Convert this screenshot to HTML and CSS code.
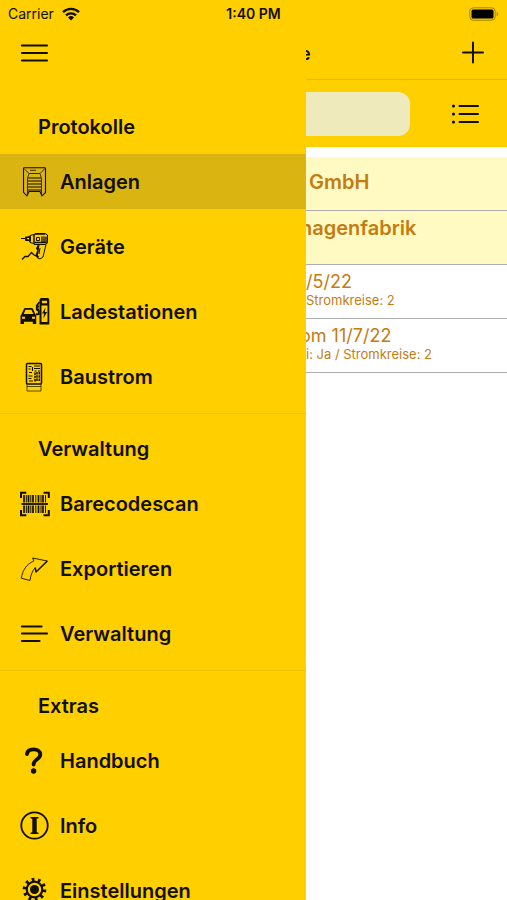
FILE: index.html
```html
<!DOCTYPE html>
<html lang="de">
<head>
<meta charset="utf-8">
<meta name="viewport" content="width=device-width, initial-scale=1">
<title>Anlagen</title>
<link rel="stylesheet" href="styles.css">
</head>
<body>
<div class="app">
  <header class="status">
    <div class="carrier">
      <span>Carrier</span>
      <svg class="wifi" viewBox="0 0 18 14" aria-hidden="true">
        <path d="M1 5.2A11.5 11.5 0 0 1 17 5.2M4 8.4a7.2 7.2 0 0 1 10 0" fill="none" stroke="currentColor" stroke-width="2.3"/>
        <path d="M9 13.4 6 10.5a4.3 4.3 0 0 1 6 0z" fill="currentColor"/>
      </svg>
    </div>
    <div class="time">1:40 PM</div>
    <svg class="battery" viewBox="0 0 30 14" aria-hidden="true">
      <rect x="0.8" y="0.8" width="25.4" height="12.4" rx="3.6" fill="none" stroke="#a38600" stroke-width="1"/>
      <rect x="2.5" y="2.5" width="22" height="9" rx="1.5" fill="#000"/>
      <path d="M27.7 4.8v4.4c2-.8 2-3.6 0-4.4z" fill="#a38600"/>
    </svg>
  </header>

  <div class="columns">
    <nav class="drawer" aria-label="Menü">
      <div class="drawer-bar">
        <button class="icon-button" type="button" aria-label="Menü">
          <svg class="icon" viewBox="0 0 30 30"><path d="M2 7.5h25M2 15h25M2 22.5h25" fill="none" stroke="currentColor" stroke-width="2.2" stroke-linecap="round"/></svg>
        </button>
      </div>

      <section class="group">
        <h2>Protokolle</h2>
        <ul>
          <li><a class="item selected" href="#anlagen" aria-current="page">
            <svg class="icon" viewBox="0 0 30 30" fill="none" stroke="currentColor" stroke-width="1">
              <path d="M3.500 1.200Q3.500.7 4.500.7h20q1 0 1 .8v24l-3.500 3.300-2-4.300H9L7 28.800l-3.500-3.500z" stroke-width="1.100"/>
              <path d="M4 1.500l5 5-1.500 5V28M25 1.500l-5 5 1.500 5V28M9 6.500h11" stroke-width=".8"/>
              <path d="M10 3.300h6" stroke-width=".8"/>
              <path d="M8 11h13M8 14h13M8 17h13M8 20h13M8 23h13" stroke-width="1.200"/>
            </svg>
            <span>Anlagen</span></a></li>
          <li><a class="item" href="#geraete">
            <svg class="icon" viewBox="0 0 30 30" fill="none" stroke="currentColor" stroke-width="1">
              <path d="M1 6.500h5l4-2.500v5.500l-4-2.500M10 3.500l4-1v9l-4-1zM14 2.500l2-1h9l2.500 1.500v8l-2.500 1.500H14z"/>
              <path d="M6 5.200h4v3H6zM15 2h10M14.500 10.500h12" stroke-width="1.600"/>
              <path d="M22 4.500v6M24 4.500v6M26 4.500v6" stroke-width="1.300"/>
              <path d="M16.500 5.500h3v3h-3zM19 13l-1.500 8-.5 4.500 3 1.500 3-2 3-12.500M20 16l-1 6"/>
              <path d="M18.500 13.500l-1.500 3 1.300 2M18 19l-1.500 4 2 2.500" stroke-width="1.800"/>
              <path d="M2 27.500l3-3h3l3.500-4 2.500 2.500 3.500 1.500" stroke-width="1.300"/>
            </svg>
            <span>Geräte</span></a></li>
          <li><a class="item" href="#ladestationen">
            <svg class="icon" viewBox="0 0 30 30">
              <path fill="currentColor" fill-rule="evenodd" d="M1.600 17 4 11.800Q4.400 11 5.500 11h6q1 0 1.500.8L15.200 17l1 1.800V27h-3.400v-2.300H4V27H.5v-8.200zM3.700 17h9.700l-2-4.300H5.500zM2 19.700v2h3v-2zM12 19.700v2h3v-2z"/>
              <path fill="currentColor" fill-rule="evenodd" d="M21.500 1h6Q29.300 1 29.300 3v24.500h-9.800V3q0-2 2-2zM22 3.700v2.500h5V3.700zM21.500 8.500v16.500h6V8.500z"/>
              <path d="M25.500 10.500l-3.500 6h2.200l-1 5 4-6.500h-2.400z" fill="currentColor"/>
              <path d="M19.500 5l-2.700 3.500v4l2 1.500v3l-3 .5M16 9.500h3M16 12.500h3" fill="none" stroke="currentColor" stroke-width="1.800"/>
            </svg>
            <span>Ladestationen</span></a></li>
          <li><a class="item" href="#baustrom">
            <svg class="icon" viewBox="0 0 30 30" fill="none" stroke="currentColor">
              <rect x="6.500" y="1.500" width="15" height="20.500" rx="1" stroke-width="1.500"/>
              <path d="M7 22v7h14v-7M7 24.500h14" stroke-width=".7"/>
              <path d="M8.500 4.500h3M8.500 7h2M14 4h6M14 6.500h6M14.500 9h2M18 9h2M9 10.500h3" stroke-width="1"/>
              <path d="M15 10.500v9M17 10v10M19.300 10v10" stroke-width="1.500" stroke-dasharray="2.500 .8"/>
              <path d="M8.500 14h4M8.500 16.500h3M9 19h4M12.500 5v4" stroke-width="1.100"/>
            </svg>
            <span>Baustrom</span></a></li>
        </ul>
      </section>

      <section class="group">
        <h2>Verwaltung</h2>
        <ul>
          <li><a class="item" href="#scan">
            <svg class="icon" viewBox="0 0 30 30" fill="none" stroke="currentColor">
              <path d="M1 9V3.700h5.300M23.500 3.700h5.300V9M28.800 21v5.300h-5.300M6.300 26.300H1V21" stroke-width="2"/>
              <path d="M1.500 15h26.500" stroke-width="1.800"/>
              <path d="M4 6v7.500M8.500 6v7.500M13 6v7.500M18.500 6v7.500M23 6v7.500M4 16.500V24M8.500 16.500V24M13 16.500V24M18.500 16.500V24M23 16.500V24" stroke-width="1.700"/>
              <path d="M6.300 6v7.500M10.800 6v7.500M15.800 6v7.500M21 6v7.500M25.500 6v7.500M6.300 16.500V24M10.800 16.500V24M15.800 16.500V24M21 16.500V24M25.500 16.500V24" stroke-width="1"/>
            </svg>
            <span>Barecodescan</span></a></li>
          <li><a class="item" href="#export">
            <svg class="icon" viewBox="0 0 30 30" fill="none" stroke="currentColor" stroke-linejoin="round">
              <path d="M12.700 4l14.600 3L16 18l-.7-4.300C12.500 16.500 10.700 21 10 26.500l-8.700-2.300C2.500 16.500 6.500 10 13.800 7z" stroke-width=".9"/>
              <path d="M27.300 7 16 18l-.7-4.300" stroke-width="1.400"/>
            </svg>
            <span>Exportieren</span></a></li>
          <li><a class="item" href="#verwaltung">
            <svg class="icon" viewBox="0 0 30 30"><path d="M2 7.500h19.500M2 14.500h25M2 22h17.500" fill="none" stroke="currentColor" stroke-width="2.200" stroke-linecap="round"/></svg>
            <span>Verwaltung</span></a></li>
        </ul>
      </section>

      <section class="group">
        <h2>Extras</h2>
        <ul>
          <li><a class="item" href="#handbuch">
            <svg class="icon" viewBox="0 0 30 30">
              <path d="M7 8c.4-3.200 3-4.700 6.500-4.700 4 0 6.800 2 6.800 5.300 0 4.900-6.700 4.400-6.700 10" fill="none" stroke="currentColor" stroke-width="3.800" stroke-linecap="round"/>
              <circle cx="13.600" cy="25" r="2.700" fill="currentColor"/>
            </svg>
            <span>Handbuch</span></a></li>
          <li><a class="item" href="#info">
            <svg class="icon" viewBox="0 0 30 30">
              <circle cx="14.500" cy="14.500" r="13.200" fill="none" stroke="currentColor" stroke-width="1.800"/>
              <path d="M10.500 6h8v1.300l-1.800.5v13.400l1.800.5V23h-8v-1.300l1.800-.5V7.800l-1.800-.5z" fill="currentColor"/>
            </svg>
            <span>Info</span></a></li>
          <li><a class="item" href="#einstellungen">
            <svg class="icon" viewBox="0 0 30 30" fill="none" stroke="currentColor">
              <circle cx="14.500" cy="13.500" r="7.800" stroke-width="2.200"/>
              <circle cx="14.500" cy="13.500" r="10" stroke-width="3.600" stroke-dasharray="2.700 3.583"/>
              <circle cx="14.500" cy="13.500" r="4.500" fill="currentColor" stroke="none"/>
            </svg>
            <span>Einstellungen</span></a></li>
        </ul>
      </section>
    </nav>

    <main class="content">
      <div class="title-bar">
        <h1 class="clipped">e</h1>
        <button class="icon-button" type="button" aria-label="Hinzufügen">
          <svg class="icon" viewBox="0 0 30 30"><path d="M15 4.500v20M5 14.500h20" fill="none" stroke="currentColor" stroke-width="2" stroke-linecap="round"/></svg>
        </button>
      </div>
      <div class="search-bar">
        <input class="search" type="search" aria-label="Suche">
        <button class="icon-button" type="button" aria-label="Liste">
          <svg class="icon" viewBox="0 0 30 30"><path d="M9.500 7h18.500M9.500 15h18.500M9.500 23h18.500" fill="none" stroke="currentColor" stroke-width="2" stroke-linecap="round"/><g fill="currentColor"><circle cx="3.500" cy="7" r="1.600"/><circle cx="3.500" cy="15" r="1.600"/><circle cx="3.500" cy="23" r="1.600"/></g></svg>
        </button>
      </div>
      <ul class="records">
        <li class="customer centered"><strong>GmbH</strong></li>
        <li class="customer"><strong class="clipped">hagenfabrik</strong></li>
        <li class="record"><span class="name">/5/22</span><small>Stromkreise: 2</small></li>
        <li class="record"><span class="name clipped">om 11/7/22</span><small>i: Ja / Stromkreise: 2</small></li>
      </ul>
    </main>
  </div>
</div>
</body>
</html>
```
FILE: styles.css
```css
* {
  box-sizing: border-box;
}

body {
  margin: 0;
  background: #fff;
  color: #120e00;
  font-family: Inter, "Liberation Sans", sans-serif;
}

h1, h2, ul {
  margin: 0;
  padding: 0;
}

ul {
  list-style: none;
}

.app {
  display: flex;
  flex-direction: column;
  height: 100vh;
  overflow: hidden;
}

.status {
  display: grid;
  grid-template-columns: 1fr auto 1fr;
  align-items: center;
  flex: none;
  height: 27px;
  padding: 0 8px;
  background: #ffcf00;
  font-size: 14px;
}

.carrier {
  display: flex;
  align-items: center;
  gap: 8px;
}

.wifi {
  width: 18px;
  height: 14px;
}

.time {
  font-weight: 600;
}

.battery {
  justify-self: end;
  width: 30px;
  height: 14px;
}

.columns {
  display: flex;
  flex: 1;
  min-height: 0;
}

.drawer {
  flex: none;
  width: 306px;
  overflow: hidden;
  background: #ffcf00;
}

.drawer-bar {
  display: flex;
  align-items: center;
  height: 65px;
  padding: 0 20px 13px;
}

.icon-button {
  display: flex;
  padding: 0;
  border: 0;
  background: none;
  color: inherit;
}

.icon {
  flex: none;
  display: block;
  width: 30px;
  height: 30px;
}

.group {
  padding: 8px 0 9px;
  border-bottom: 1px solid #eec205;
}

.group h2 {
  padding-left: 38px;
  font-size: 20px;
  font-weight: 600;
  line-height: 54px;
}

.group ul {
  display: grid;
  gap: 10px;
}

.item {
  display: flex;
  align-items: center;
  gap: 10px;
  height: 55px;
  padding: 0 20px;
  color: inherit;
  font-size: 20px;
  font-weight: 600;
  text-decoration: none;
}

.selected {
  background: #dab410;
}

.content {
  flex: 1;
  min-width: 0;
  overflow: hidden;
}

.title-bar,
.search-bar {
  display: flex;
  align-items: center;
  justify-content: space-between;
  background: #ffcf00;
}

.title-bar {
  height: 53px;
  padding-right: 19px;
  border-bottom: 1px solid #e6bb08;
}

.title-bar h1 {
  font-size: 18px;
  font-weight: 600;
}

.search-bar {
  gap: 40px;
  height: 67px;
  padding-right: 27px;
}

.search {
  flex: 1;
  min-width: 0;
  height: 44px;
  padding: 0 12px;
  border: 0;
  border-radius: 0 12px 12px 0;
  background: #efeabc;
  font: inherit;
  appearance: none;
}

.records {
  padding-top: 10px;
  color: #c47c10;
}

.records li {
  display: flex;
  flex-direction: column;
  height: 54px;
  padding-top: 5px;
  border-bottom: 1px solid #adadad;
  white-space: nowrap;
}

.records .customer {
  background: #fff9c2;
}

.records .centered {
  justify-content: center;
  padding: 0 3px 3px;
}

.records strong {
  font-size: 20px;
  font-weight: 600;
  line-height: 24px;
}

.name {
  font-size: 18px;
  line-height: 23px;
}

.records small {
  font-size: 13px;
  line-height: 14px;
}

.clipped {
  margin-left: -6px;
}
```
